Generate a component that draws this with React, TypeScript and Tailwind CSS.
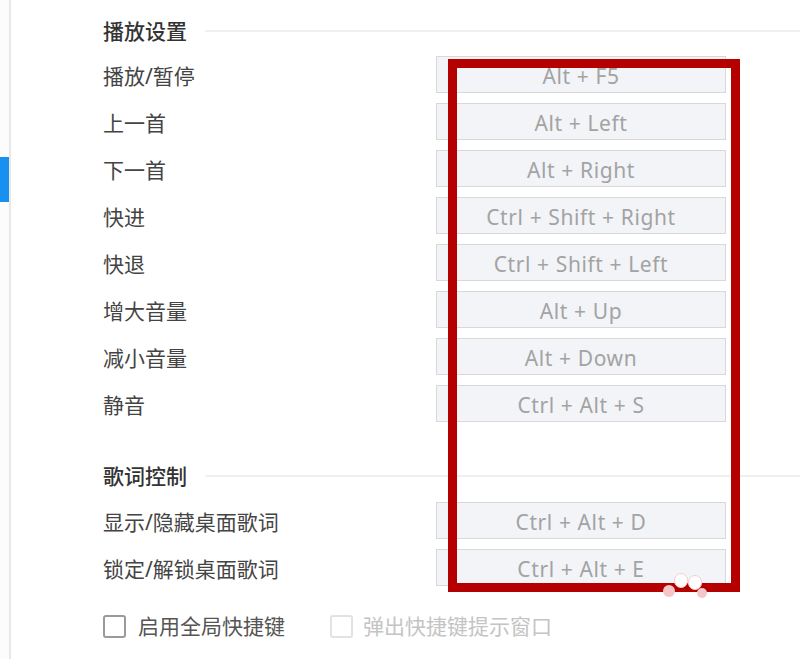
import React from "react";

const font = { fontFamily: '"Noto Sans", "Noto Sans CJK SC", sans-serif' };

function Heading({ title, className }: { title: string; className: string }) {
  return (
    <div className={"flex items-center h-[24px] " + className}>
      <span className="text-[21px] font-medium text-[#333] leading-none whitespace-nowrap">{title}</span>
      <div className="flex-1 h-[2px] bg-[#f0f0f0] ml-[18px]" />
    </div>
  );
}

function Row({ label, keys }: { label: string; keys: string }) {
  return (
    <div className="flex items-center h-[37px]">
      <div className="w-[333px] text-[21px] text-[#444] leading-none whitespace-nowrap pt-[3px]">{label}</div>
      <div className="w-[290px] h-[37px] border border-[#d8d8d8] bg-[#f2f4f7] flex items-center justify-center pt-[3px] text-[21px] tracking-[0.6px] text-[#a3a3a3] leading-none">
        {keys}
      </div>
    </div>
  );
}

export default function App() {
  const play = [
    ["播放/暂停", "Alt + F5"],
    ["上一首", "Alt + Left"],
    ["下一首", "Alt + Right"],
    ["快进", "Ctrl + Shift + Right"],
    ["快退", "Ctrl + Shift + Left"],
    ["增大音量", "Alt + Up"],
    ["减小音量", "Alt + Down"],
    ["静音", "Ctrl + Alt + S"],
  ];
  const lyric = [
    ["显示/隐藏桌面歌词", "Ctrl + Alt + D"],
    ["锁定/解锁桌面歌词", "Ctrl + Alt + E"],
  ];
  return (
    <div className="relative w-[800px] h-[659px] bg-white overflow-hidden flex" style={font}>
      <div className="w-[11px] h-full border-r-2 border-[#e8e8e8] bg-[#fcfcfc] pt-[157px]">
        <div className="w-[9px] h-[45px] bg-[#1890f0]" />
      </div>
      <div className="flex-1 pl-[92px] flex flex-col">
        <Heading title="播放设置" className="mt-[19px]" />
        <div className="flex flex-col gap-[10px] mt-[13px]">
          {play.map(([l, k]) => (
            <Row key={l} label={l} keys={k} />
          ))}
        </div>
        <Heading title="歌词控制" className="mt-[42px]" />
        <div className="flex flex-col gap-[10px] mt-[14px]">
          {lyric.map(([l, k]) => (
            <Row key={l} label={l} keys={k} />
          ))}
        </div>
        <div className="flex items-center mt-[29px] h-[23px]">
          <div className="w-[23px] h-[23px] border-2 border-[#9a9a9a] rounded-[3px]" />
          <span className="ml-[12px] text-[21px] text-[#555] leading-none">启用全局快捷键</span>
          <div className="ml-[45px] w-[23px] h-[23px] border-2 border-[#e2e2e2] rounded-[3px]" />
          <span className="ml-[10px] text-[21px] text-[#c4c4c4] leading-none">弹出快捷键提示窗口</span>
        </div>
      </div>
      <div className="absolute left-[448px] top-[59px] w-[292px] h-[533px] border-[9px] border-[#b50000]" />
      <div className="absolute left-[674px] top-[573px] w-[14px] h-[15px] rounded-full bg-white border border-[#f3d0d0]" />
      <div className="absolute left-[688px] top-[575px] w-[14px] h-[15px] rounded-full bg-white border border-[#f3d0d0]" />
      <div className="absolute left-[663px] top-[585px] w-[12px] h-[12px] rounded-full bg-[#f4c6c6]" />
      <div className="absolute left-[697px] top-[588px] w-[10px] h-[10px] rounded-full bg-[#f4c6c6]" />
    </div>
  );
}
